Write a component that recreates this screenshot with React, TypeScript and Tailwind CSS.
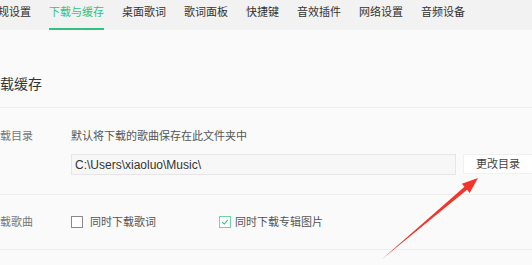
import React from 'react';

const tabs = ['常规设置', '下载与缓存', '桌面歌词', '歌词面板', '快捷键', '音效插件', '网络设置', '音频设备'];

const App: React.FC = () => {
    return (
        <div
            className="relative h-[265px] w-[532px] overflow-hidden bg-[#fafafa]"
            style={{ fontFamily: '"Liberation Sans", "Noto Sans CJK SC", sans-serif' }}
        >
            {/* Tabs */}
            <div className="flex h-[30px] w-[600px] bg-[#f2f2f2]">
                <div className="ml-[-13px] flex gap-[18px]">
                    {tabs.map((t) => {
                        const active = t === '下载与缓存';
                        return (
                            <div key={t} className="relative h-[30px] shrink-0 pt-[6px]">
                                <span
                                    className={`block text-[11px] leading-[13px] whitespace-nowrap ${
                                        active ? 'text-[#31c27c]' : 'text-[#333]'
                                    }`}
                                >
                                    {t}
                                </span>
                                {active && <div className="absolute left-0 right-0 top-[28px] h-[2px] bg-[#31c27c]" />}
                            </div>
                        );
                    })}
                </div>
            </div>

            {/* Heading */}
            <div className="w-[600px] border-b border-[#ededed] pb-[13px] pt-[44px]">
                <h2 className="ml-[-14px] text-[14px] leading-[20px] text-[#333]">下载缓存</h2>
            </div>

            {/* Download directory */}
            <div className="ml-[-11px] flex w-[620px] border-b border-[#ededed] pb-[19px] pt-[20px]">
                <div className="w-[82px] shrink-0 text-[11px] leading-[16px] text-[#777]">下载目录</div>
                <div className="flex flex-col">
                    <div className="text-[11px] leading-[16px] text-[#555]">默认将下载的歌曲保存在此文件夹中</div>
                    <div className="mt-[10px] flex items-start">
                        <div className="flex h-[21px] w-[385px] items-center border border-[#e6e6e6] bg-[#f7f7f7] pl-[3px] text-[12px] text-[#333]">
                            C:\Users\xiaoluo\Music\
                        </div>
                        <button className="ml-[7px] flex h-[20px] w-[70px] items-center justify-center border border-[#f0f0f0] bg-white text-[11px] text-[#444]">
                            更改目录
                        </button>
                    </div>
                </div>
            </div>

            {/* Download songs */}
            <div className="ml-[-11px] flex h-[55px] w-[620px] items-center border-b border-[#ededed]">
                <div className="w-[82px] shrink-0 text-[11px] leading-[16px] text-[#777]">下载歌曲</div>
                <label className="flex items-center">
                    <span className="h-[12px] w-[12px] border border-[#8a8a8a] bg-white" />
                    <span className="ml-[7px] text-[11px] leading-[16px] text-[#555]">同时下载歌词</span>
                </label>
                <label className="ml-[63px] flex items-center">
                    <span className="flex h-[12px] w-[12px] items-center justify-center border border-[#6fd5a5] bg-white">
                        <svg width="8" height="8" viewBox="0 0 8 8">
                            <path d="M1.2 4.2 L3.2 6 L6.8 1.8" fill="none" stroke="#31c27c" strokeWidth="1.1" />
                        </svg>
                    </span>
                    <span className="ml-[4px] text-[11px] leading-[16px] text-[#555]">同时下载专辑图片</span>
                </label>
            </div>

            {/* Red annotation arrow */}
            <svg className="pointer-events-none absolute left-0 top-0" width="532" height="265" viewBox="0 0 532 265">
                <polygon
                    points="381,260 464.5,186.8 461.9,183.7 478,178 469.7,192.9 467.1,189.8"
                    fill="#f2352b"
                />
            </svg>
        </div>
    );
};

export default App;
